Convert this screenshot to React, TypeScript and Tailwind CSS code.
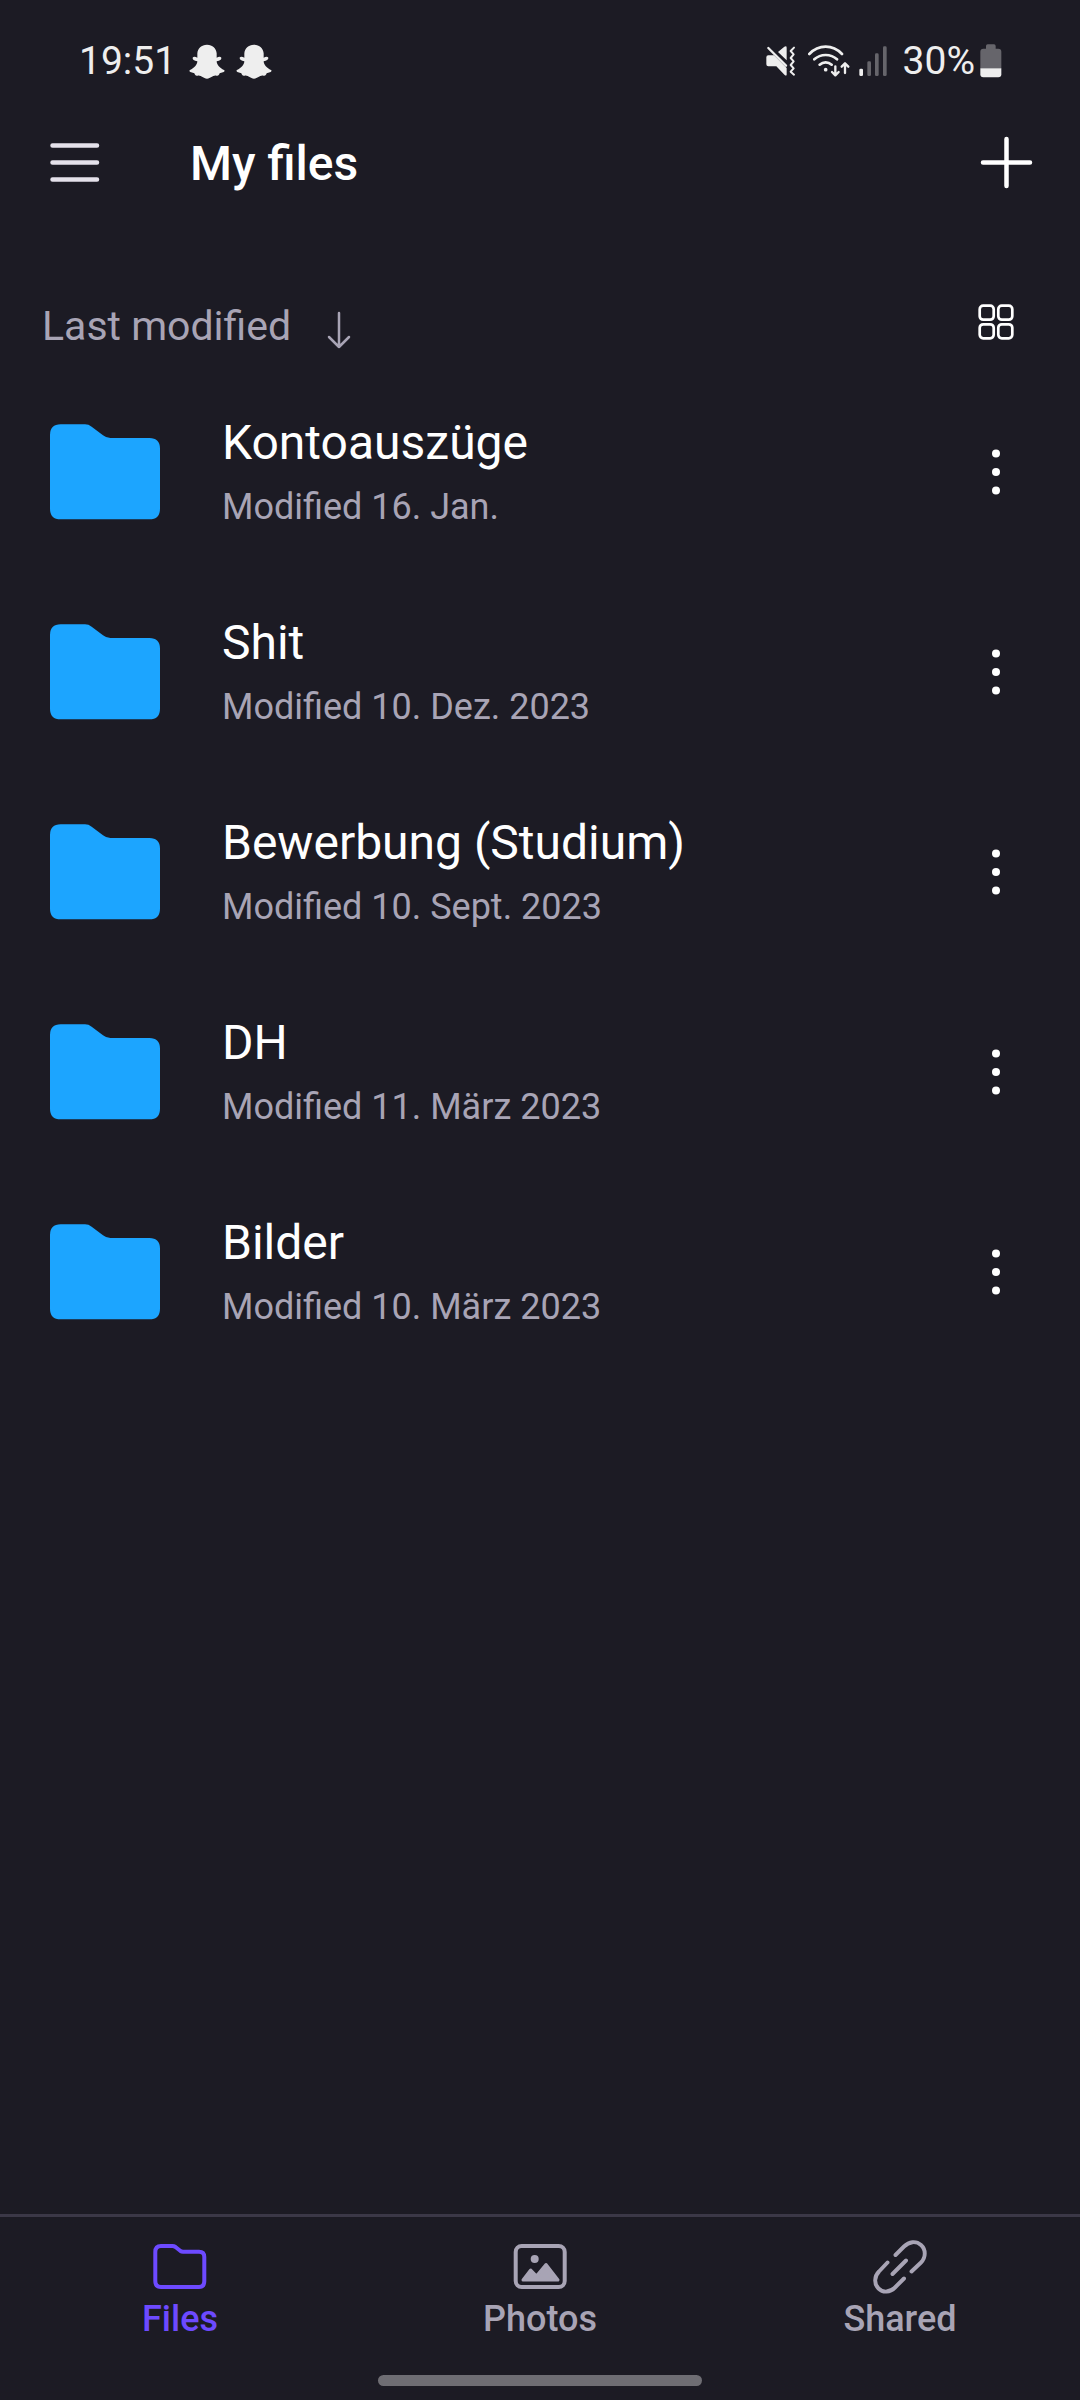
import React from "react";

const folders = [
  { name: "Kontoauszüge", modified: "Modified 16. Jan." },
  { name: "Shit", modified: "Modified 10. Dez. 2023" },
  { name: "Bewerbung (Studium)", modified: "Modified 10. Sept. 2023" },
  { name: "DH", modified: "Modified 11. März 2023" },
  { name: "Bilder", modified: "Modified 10. März 2023" },
];

function Ghost() {
  return (
    <svg className="h-[35px] w-9" viewBox="0 0 108 105" fill="#eeeeee" aria-hidden="true">
      <path d="M54 2C37 2 26 13 25 28L25 41C20 38 13 37 11 41C10 46 15 50 25 52C25 62 15 73 3 78C0 80 1 82 4 84L16 88C18 94 20 96 26 95C37 93 42 104 54 104C66 104 71 93 82 95C88 96 90 94 92 88L104 84C107 82 108 80 105 78C93 73 83 62 83 52C93 50 98 46 97 41C95 37 88 38 83 41L83 28C82 13 71 2 54 2Z" />
    </svg>
  );
}

function MutedVibrate() {
  return (
    <svg className="h-8 w-[30px]" viewBox="75 73 90 96" fill="none" aria-hidden="true">
      <path fill="#eeeeee" d="M82 104H99L137 142V162Q136 167 131 163L106 137H82Q76 137 76 131V110Q76 104 82 104ZM111 94L130 78Q137 74 137 81V119Z" />
      <path stroke="#eeeeee" strokeWidth="7" strokeLinecap="round" d="M82 82L135 135" />
      <path stroke="#eeeeee" strokeWidth="6" strokeLinecap="round" strokeLinejoin="round" d="M159 81L149 91L158 101L149 112L158 122L149 133L158 143L149 153L159 162" />
    </svg>
  );
}

function Wifi() {
  return (
    <svg className="h-8 w-[42px]" viewBox="204 73 126 96" fill="none" stroke="#eeeeee" strokeWidth="8" strokeLinecap="round" strokeLinejoin="round" aria-hidden="true">
      <path d="M208 100Q229 78 257 78T306 100M223 116Q237 103 257 103T291 116M239 132Q247 125 257 125T275 132" />
      <circle cx="257" cy="147" r="5.5" fill="#eeeeee" stroke="none" />
      <path strokeWidth="7" d="M286 137V163M276 154L286 164L296 154M315 157V129M305 138L315 128L325 138" />
    </svg>
  );
}

function Signal() {
  return (
    <svg className="h-8 w-7" viewBox="357 73 84 96" aria-hidden="true">
      <rect x="358" y="144" width="11" height="22" rx="4" fill="#eeeeee" />
      <g fill="#66656b">
        <rect x="382" y="122" width="11" height="44" rx="4" />
        <rect x="405" y="98" width="11" height="68" rx="4" />
        <rect x="429" y="77" width="11" height="89" rx="4" />
      </g>
    </svg>
  );
}

function Battery() {
  return (
    <svg className="h-[34px] w-[22px]" viewBox="719 71 66 102" aria-hidden="true">
      <path fill="#66656b" d="M737 85V77Q737 72 742 72H761Q766 72 766 77V85H774Q783 85 783 94V144H720V94Q720 85 729 85Z" />
      <path fill="#eeeeee" d="M720 144H783V162Q783 171 774 171H729Q720 171 720 162Z" />
    </svg>
  );
}

function StatusBar() {
  return (
    <div className="flex h-[120px] items-center justify-between pt-[2px] pr-[78px] pl-[79px] text-[39px] leading-none text-[#eeeeee]">
      <div className="flex items-center gap-[11px]">
        <span className="mr-[2px]">19:51</span>
        <Ghost />
        <Ghost />
      </div>
      <div className="flex items-center">
        <MutedVibrate />
        <span className="ml-3 flex"><Wifi /></span>
        <span className="ml-[9px] flex"><Signal /></span>
        <span className="ml-4">30%</span>
        <span className="ml-[5px] flex"><Battery /></span>
      </div>
    </div>
  );
}

function FolderRow({ name, modified }: { name: string; modified: string }) {
  return (
    <li className="flex h-[200px] items-center pr-11 pl-[49px]">
      <svg className="h-24 w-28 shrink-0" viewBox="0 0 336 288" aria-hidden="true">
        <path fill="#1ca5ff" d="M35 1H108Q119 1 128 8L162 34Q172 42 184 42H301Q333 42 333 74V254Q333 286 301 286H35Q3 286 3 254V33Q3 1 35 1Z" />
      </svg>
      <div className="ml-[61px] min-w-0 flex-1 pt-[6px]">
        <div className="truncate text-[48px] leading-[64px] text-white">{name}</div>
        <div className="truncate text-[36px] leading-[64px] text-[#a8a4b5]">{modified}</div>
      </div>
      <button type="button" aria-label={`Options for ${name}`} className="flex h-24 w-20 shrink-0 items-center justify-center">
        <svg className="h-12 w-3" viewBox="0 0 12 48" fill="#ffffff" aria-hidden="true">
          <circle cx="6" cy="5.5" r="4" />
          <circle cx="6" cy="24" r="4" />
          <circle cx="6" cy="42.5" r="4" />
        </svg>
      </button>
    </li>
  );
}

function NavItem({ label, active, children }: { label: string; active?: boolean; children: React.ReactNode }) {
  return (
    <a
      href="#"
      aria-current={active ? "page" : undefined}
      className={`flex flex-1 flex-col items-center ${active ? "text-[#6d4aff]" : "text-[#a8a4b5]"}`}
    >
      <svg className="h-14 w-14" viewBox="0 0 56 56" fill="none" stroke="currentColor" strokeWidth="4" strokeLinecap="round" strokeLinejoin="round" aria-hidden="true">
        {children}
      </svg>
      <span className="text-[36px] leading-[48px] font-medium">{label}</span>
    </a>
  );
}

export default function App() {
  return (
    <div className="flex min-h-screen flex-col bg-[#1c1b24] font-['Roboto',sans-serif]">
      <StatusBar />
      <header className="flex h-[84px] items-center pr-11 pl-[46px]">
        <button type="button" aria-label="Open menu" className="flex h-14 w-14 items-center justify-center">
          <svg className="h-14 w-14" viewBox="0 0 56 56" stroke="#e4e1ea" strokeWidth="4.5" strokeLinecap="round" aria-hidden="true">
            <path d="M6.5 11.5H51M6.5 28.5H51M6.5 45.5H51" />
          </svg>
        </button>
        <h1 className="ml-[88px] flex-1 pt-1 text-[48px] leading-[60px] font-medium text-white">My files</h1>
        <button type="button" aria-label="Add" className="flex h-14 w-14 items-center justify-center">
          <svg className="h-14 w-14" viewBox="0 0 56 56" stroke="#ffffff" strokeWidth="4.5" strokeLinecap="round" aria-hidden="true">
            <path d="M3 28.5H50M26.5 5V52" />
          </svg>
        </button>
      </header>
      <main className="flex-1 pt-[68px]">
        <div className="flex h-[100px] items-center justify-between pr-11 pl-[42px]">
          <button type="button" className="flex items-center gap-9 pt-2 text-[41px] leading-[56px] text-[#a8a4b5]">
            Last modified
            <svg className="mt-2 h-10 w-6" viewBox="0 0 24 40" fill="none" stroke="currentColor" strokeWidth="2.5" strokeLinecap="round" strokeLinejoin="round" aria-hidden="true">
              <path d="M12 3V37M2 27L12 37L22 27" />
            </svg>
          </button>
          <button type="button" aria-label="Grid view" className="flex h-20 w-20 items-center justify-center">
            <svg className="h-9 w-9" viewBox="0 0 36 36" fill="none" stroke="#ffffff" strokeWidth="2.7" aria-hidden="true">
              <rect x="1.7" y="1.7" width="14" height="14" rx="3.5" />
              <rect x="20.3" y="1.7" width="14" height="14" rx="3.5" />
              <rect x="1.7" y="20.3" width="14" height="14" rx="3.5" />
              <rect x="20.3" y="20.3" width="14" height="14" rx="3.5" />
            </svg>
          </button>
        </div>
        <ul>
          {folders.map((f) => (
            <FolderRow key={f.name} name={f.name} modified={f.modified} />
          ))}
        </ul>
      </main>
      <nav aria-label="Main" className="flex border-t-3 border-[#3b3847] pt-[22px]">
        <NavItem label="Files" active>
          <path d="M9 7H20.5Q22 7 23.5 8L28.5 12Q29.5 12.7 31 12.7H47Q52.3 12.7 52.3 18V42Q52.3 48 47 48H9Q3.3 48 3.3 42V13Q3.3 7 9 7Z" />
        </NavItem>
        <NavItem label="Photos">
          <rect x="3.7" y="7" width="49" height="41" rx="6" />
          <circle cx="22.7" cy="20" r="4" fill="currentColor" stroke="none" />
          <path d="M11 41L18.7 31L24.5 37L34 25.5L46 41Z" fill="currentColor" strokeWidth="3" />
        </NavItem>
        <NavItem label="Shared">
          <path strokeWidth="3.9" d="M23.5 16L32 7.5C37 2.5 44 1.5 49 6S54 18.5 49 23.5L39.5 32.5M32 39.5L23 48.5C18 53.5 11 54 6.5 49.5S2 37.5 7 32.5L15.5 23.5M20.5 35L34 21.5" />
        </NavItem>
      </nav>
      <div className="flex justify-center pt-8 pb-[14px]">
        <div className="h-[11px] w-[30%] rounded-full bg-[#6e6d73]" />
      </div>
    </div>
  );
}
